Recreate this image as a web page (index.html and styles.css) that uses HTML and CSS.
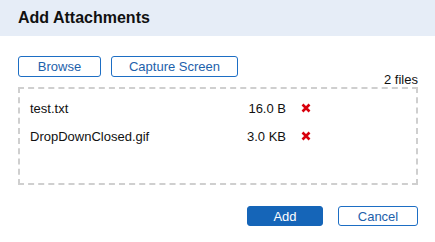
FILE: index.html
```html
<!DOCTYPE html>
<html lang="en">
<head>
  <meta charset="UTF-8">
  <title>Add Attachments</title>
  <link rel="stylesheet" href="styles.css">
</head>
<body>
  <div class="header">
    <h1>Add Attachments</h1>
  </div>

  <div class="content">
    <div class="button-group">
      <button class="btn browse-btn">Browse</button>
      <button class="btn capture-btn">Capture Screen</button>
    </div>
    <div class="file-count">2 files</div>

    <div class="file-list">
      <div class="file-row">
        <span class="file-name">test.txt</span>
        <span class="file-size">16.0 B</span>
        <svg class="file-remove" width="10" height="10" viewBox="0 0 10 10"><path d="M1.5 1.5 L8.5 8.5 M8.5 1.5 L1.5 8.5" /></svg>
      </div>
      <div class="file-row">
        <span class="file-name">DropDownClosed.gif</span>
        <span class="file-size">3.0 KB</span>
        <svg class="file-remove" width="10" height="10" viewBox="0 0 10 10"><path d="M1.5 1.5 L8.5 8.5 M8.5 1.5 L1.5 8.5" /></svg>
      </div>
    </div>

    <div class="footer">
      <button class="btn primary add-btn">Add</button>
      <button class="btn cancel-btn">Cancel</button>
    </div>
  </div>
</body>
</html>
```

FILE: styles.css
```css
body {
  margin: 0;
  font-family: "Liberation Sans", Arial, sans-serif;
  font-size: 13px;
  color: #111;
  background: #fff;
}
.header {
  background: #e6edf7;
  height: 36px;
  padding-left: 18px;
  display: flex;
  align-items: center;
}
h1 {
  margin: 0;
  font-size: 16px;
  font-weight: bold;
  color: #111;
}
.content {
  padding: 20px 17px 0 18px;
}
.btn {
  font-family: inherit;
  font-size: 13px;
  height: 21px;
  padding: 0;
  background: #fff;
  color: #1d61ab;
  border: 1px solid #1d6ec4;
  border-radius: 3px;
  cursor: pointer;
}
.button-group {
  display: flex;
  gap: 10px;
}
.browse-btn {
  width: 83px;
}
.capture-btn {
  width: 127px;
}
.file-count {
  text-align: right;
  margin-top: -4px;
  height: 14px;
  line-height: 14px;
}
.file-list {
  box-sizing: border-box;
  height: 98px;
  border: 2px dashed #cfcfcf;
  padding-top: 5px;
}
.file-row {
  display: flex;
  align-items: center;
  height: 28px;
}
.file-name {
  padding-left: 10px;
  width: 200px;
}
.file-size {
  width: 56px;
  text-align: right;
}
.file-remove {
  margin-left: 15px;
  stroke: #d8000c;
  stroke-width: 2.6;
  fill: none;
}
.footer {
  display: flex;
  justify-content: flex-end;
  gap: 15px;
  margin-top: 21px;
}
.footer .btn {
  height: 20px;
}
.add-btn {
  width: 76px;
}
.primary {
  background: #1565b8;
  border-color: #1565b8;
  color: #fff;
}
.cancel-btn {
  width: 80px;
}
```
